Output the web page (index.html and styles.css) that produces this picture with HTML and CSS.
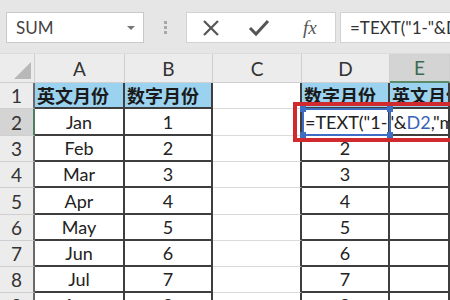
FILE: index.html
```html
<!DOCTYPE html>
<html lang="zh-CN">
<head>
    <meta charset="UTF-8">
    <title>TEXT 月份</title>
    <link rel="stylesheet" href="styles.css">
</head>
<body>
    <div class="toolbar">
        <div class="namebox">
            <span>SUM</span>
            <span class="arrow"></span>
        </div>
        <div class="grip"><i></i><i></i><i></i></div>
        <div class="fbtns">
            <svg class="btn" width="20" height="20" viewBox="0 0 20 20">
                <path d="M3 3 L17 17 M17 3 L3 17" stroke="#555" stroke-width="2.2" fill="none"/>
            </svg>
            <svg class="btn" width="22" height="20" viewBox="0 0 22 20">
                <path d="M2 10 L8 16 L20 3" stroke="#555" stroke-width="3" fill="none"/>
            </svg>
            <span class="fx">fx</span>
        </div>
        <div class="formula">=TEXT("1-"&amp;D2,"m")</div>
    </div>

    <div class="sheet">
        <div class="corner"><span class="tri"></span></div>
        <div class="colh">A</div>
        <div class="colh">B</div>
        <div class="colh">C</div>
        <div class="colh">D</div>
        <div class="colh sel">E</div>

        <div class="rowh">1</div>
        <div class="cell t head">英文月份</div>
        <div class="cell t head">数字月份</div>
        <div class="cell edge"></div>
        <div class="cell t head">数字月份</div>
        <div class="cell t head">英文月份</div>

        <div class="rowh sel">2</div>
        <div class="cell t">Jan</div>
        <div class="cell t">1</div>
        <div class="cell edge"></div>
        <div class="cell t edit">=TEXT("1-"&amp;<span class="ref">D2</span>,"m")</div>
        <div class="cell t"></div>

        <div class="rowh">3</div>
        <div class="cell t">Feb</div>
        <div class="cell t">2</div>
        <div class="cell edge"></div>
        <div class="cell t">2</div>
        <div class="cell t"></div>

        <div class="rowh">4</div>
        <div class="cell t">Mar</div>
        <div class="cell t">3</div>
        <div class="cell edge"></div>
        <div class="cell t">3</div>
        <div class="cell t"></div>

        <div class="rowh">5</div>
        <div class="cell t">Apr</div>
        <div class="cell t">4</div>
        <div class="cell edge"></div>
        <div class="cell t">4</div>
        <div class="cell t"></div>

        <div class="rowh">6</div>
        <div class="cell t">May</div>
        <div class="cell t">5</div>
        <div class="cell edge"></div>
        <div class="cell t">5</div>
        <div class="cell t"></div>

        <div class="rowh">7</div>
        <div class="cell t">Jun</div>
        <div class="cell t">6</div>
        <div class="cell edge"></div>
        <div class="cell t">6</div>
        <div class="cell t"></div>

        <div class="rowh">8</div>
        <div class="cell t">Jul</div>
        <div class="cell t">7</div>
        <div class="cell edge"></div>
        <div class="cell t">7</div>
        <div class="cell t"></div>

        <div class="rowh">9</div>
        <div class="cell t">Aug</div>
        <div class="cell t">8</div>
        <div class="cell edge"></div>
        <div class="cell t">8</div>
        <div class="cell t"></div>

        <!-- edit-mode frame on D2 and the red highlight box -->
        <div class="editbox">
            <i class="h tl"></i><i class="h tr"></i><i class="h bl"></i><i class="h br"></i>
        </div>
        <div class="mark"></div>
    </div>
</body>
</html>
```

FILE: styles.css
```css
* {
    margin: 0;
    padding: 0;
    box-sizing: border-box;
}

body {
    width: 450px;
    height: 300px;
    overflow: hidden;
    background: #fff;
    font-family: Lato, 'Noto Sans', 'Noto Sans CJK SC', sans-serif;
    color: #333;
}

/* formula bar */
.toolbar {
    height: 54px;
    background: #e6e6e6;
    display: flex;
    align-items: flex-start;
    padding-top: 12px;
    padding-left: 6px;
    border-bottom: 1px solid #dcdcdc;
}

.namebox {
    width: 138px;
    height: 31px;
    background: #fff;
    border: 1px solid #c9c9c9;
    display: flex;
    align-items: center;
    justify-content: space-between;
    padding: 0 8px 0 9px;
    font-size: 17px;
    color: #444;
}

.arrow {
    width: 0;
    height: 0;
    border-left: 4px solid transparent;
    border-right: 4px solid transparent;
    border-top: 4px solid #777;
}

.grip {
    width: 42px;
    height: 31px;
    display: flex;
    flex-direction: column;
    align-items: center;
    justify-content: center;
    gap: 2px;
}

.grip i {
    width: 3px;
    height: 3px;
    background: #a8a8a8;
}

.fbtns {
    width: 150px;
    height: 31px;
    background: #fff;
    border: 1px solid #d2d2d2;
    display: flex;
    align-items: center;
    padding-left: 14px;
    gap: 27px;
}

.fx {
    font-family: 'Liberation Serif', serif;
    font-style: italic;
    font-size: 19px;
    color: #555;
    margin-left: 6px;
}

.formula {
    flex: 1;
    height: 31px;
    margin-left: 4px;
    background: #fff;
    border: 1px solid #d2d2d2;
    border-right: none;
    padding-left: 9px;
    font-size: 17px;
    line-height: 29px;
    white-space: nowrap;
    overflow: hidden;
    color: #333;
}

/* sheet */
.sheet {
    position: relative;
    display: grid;
    grid-template-columns: 35px 90px 88px 89px 88px 60px;
    grid-template-rows: 29px 26px 27px 26px 26px 27px 26px 26px 26px 26px;
}

.corner {
    background: #ececec;
    border-right: 1px solid #cfcfcf;
    border-bottom: 1px solid #cfcfcf;
    position: relative;
}

.tri {
    position: absolute;
    right: 3px;
    bottom: 3px;
    width: 0;
    height: 0;
    border-left: 17px solid transparent;
    border-bottom: 17px solid #b8b8b8;
}

.colh {
    background: #ececec;
    border-right: 1px solid #cfcfcf;
    border-bottom: 1px solid #cfcfcf;
    display: flex;
    align-items: center;
    justify-content: center;
    font-size: 19px;
    color: #333;
}

.colh.sel {
    background: #d4d4d4;
    color: #3c6a4e;
    border-bottom: 2px solid #5a8a6a;
}

.rowh {
    background: #ececec;
    border-right: 2px solid #6a6a6a;
    border-bottom: 1px solid #cfcfcf;
    display: flex;
    align-items: center;
    justify-content: center;
    font-size: 19px;
    color: #333;
}

.rowh.sel {
    background: #d4d4d4;
    border-right-color: #4f7d5f;
}

.cell {
    border-right: 1px solid #dadada;
    border-bottom: 1px solid #dadada;
    display: flex;
    align-items: center;
    justify-content: center;
    font-size: 18px;
    white-space: nowrap;
    color: #222;
}

.cell.t {
    border-right: 2px solid #3e3e3e;
    border-bottom: 2px solid #3e3e3e;
}

.cell.edge {
    border-right: 2px solid #3e3e3e;
}

.head {
    background: #9ad2ef;
    font-family: 'Noto Sans CJK SC', sans-serif;
    font-weight: 700;
    font-size: 18px;
    color: #1a1a1a;
    overflow: hidden;
    justify-content: flex-start;
    padding-left: 2px;
}

.edit {
    justify-content: flex-start;
    padding-left: 3px;
    overflow: visible;
    font-size: 18px;
    z-index: 1;
    border-right-color: transparent;
}

.ref {
    color: #3a62b8;
}

.editbox {
    position: absolute;
    left: 302px;
    top: 54px;
    width: 89px;
    height: 28px;
    border: 2px solid #3d6ec4;
    z-index: 2;
}

.h {
    position: absolute;
    width: 6px;
    height: 6px;
    background: #3d6ec4;
}

.tl { left: -4px; top: -4px; }
.tr { right: -4px; top: -4px; }
.bl { left: -4px; bottom: -4px; }
.br { right: -4px; bottom: -4px; }

.mark {
    position: absolute;
    left: 293px;
    top: 48px;
    width: 170px;
    height: 40px;
    border: 4px solid #d12a2e;
    z-index: 3;
}
```
